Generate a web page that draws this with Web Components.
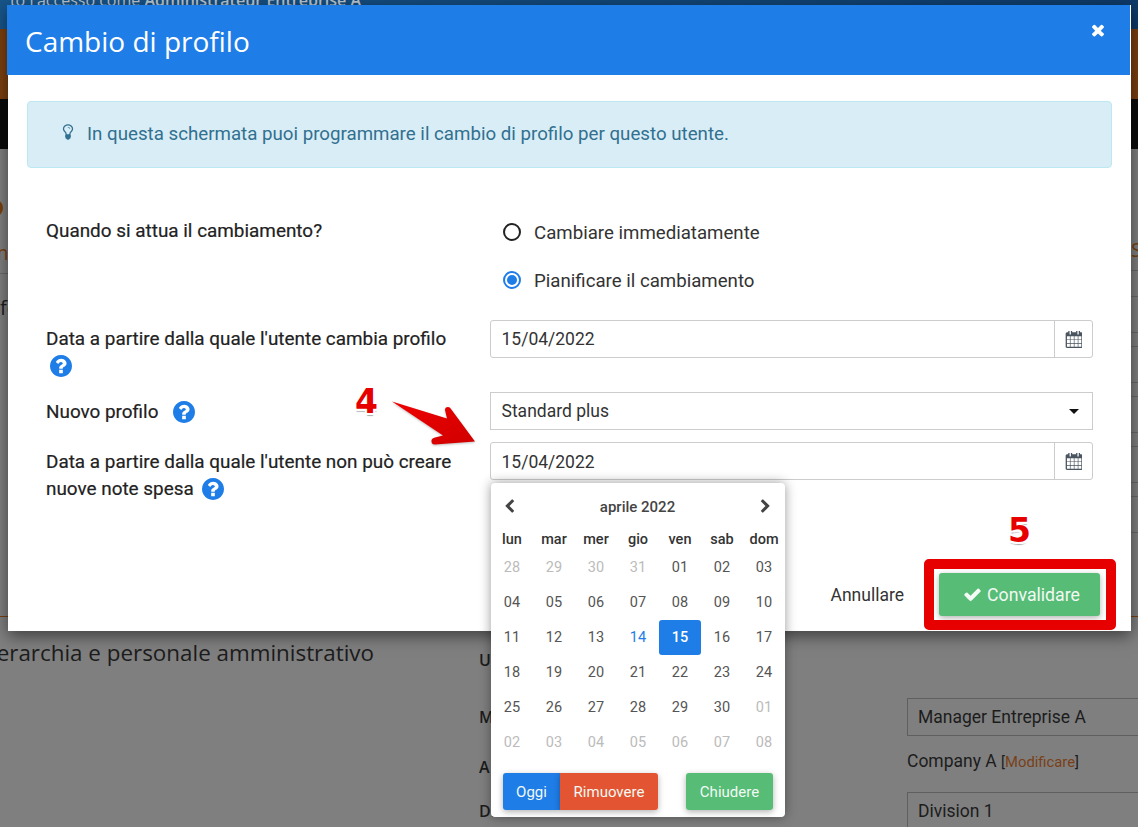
<!DOCTYPE html>
<html lang="it">
<head>
<meta charset="utf-8">
<title>Cambio di profilo</title>
<style>
  html, body { margin: 0; height: 100%; overflow: hidden; background: #7f7f7f; }
  body { font-family: Roboto, "Liberation Sans", sans-serif; }
</style>
</head>
<body>
<x-app>
  <x-backdrop></x-backdrop>

  <x-modal heading="Cambio di profilo">
    <x-alert>In questa schermata puoi programmare il cambio di profilo per questo utente.</x-alert>

    <x-form-row style="margin-top:40px">
      <span slot="label" style="display:block;padding-top:3px">Quando si attua il cambiamento?</span>
      <x-radio>Cambiare immediatamente</x-radio>
      <x-radio checked>Pianificare il cambiamento</x-radio>
    </x-form-row>

    <x-form-row style="margin-top:16px">
      <span slot="label" style="display:block;margin:-1px 0 1px">Data a partire dalla quale l'utente cambia profilo <br><x-help style="margin-left:4px"></x-help></span>
      <x-date-field value="15/04/2022"></x-date-field>
    </x-form-row>

    <x-form-row style="margin-top:12px">
      <span slot="label">Nuovo profilo <x-help style="margin-left:10px"></x-help></span>
      <x-select-field value="Standard plus"></x-select-field>
    </x-form-row>

    <x-form-row style="margin-top:12px">
      <span slot="label">Data a partire dalla quale l'utente non può creare<br>nuove note spesa <x-help style="margin-left:4px"></x-help></span>
      <x-date-field value="15/04/2022" nudge></x-date-field>
    </x-form-row>

    <x-modal-footer slot="footer">
      <span class="cancel">Annullare</span>
      <x-btn color="#56bc76" size="17.7" width="161" height="43" check>Convalidare</x-btn>
    </x-modal-footer>
  </x-modal>

  <x-calendar></x-calendar>
  <x-arrow></x-arrow>
  <x-mark style="left:355px;top:381px">4</x-mark>
  <x-mark style="left:1008px;top:510px">5</x-mark>
  <x-frame></x-frame>
</x-app>

<script>
const ICONS = {
  check: ['0 0 1792 1792', 'M1671 566q0 40-28 68l-724 724-136 136q-28 28-68 28t-68-28l-136-136-362-362q-28-28-28-68t28-68l136-136q28-28 68-28t68 28l294 295 656-657q28-28 68-28t68 28l136 136q28 28 28 68z'],
  times: ['0 0 1792 1792', 'M1490 1322q0 40-28 68l-136 136q-28 28-68 28t-68-28l-294-294-294 294q-28 28-68 28t-68-28l-136-136q-28-28-28-68t28-68l294-294-294-294q-28-28-28-68t28-68l136-136q28-28 68-28t68 28l294 294 294-294q28-28 68-28t68 28l136 136q28 28 28 68t-28 68l-294 294 294 294q28 28 28 68z'],
  help: ['128 128 1536 1536', 'M1024 1376v-192q0-14-9-23t-23-9h-192q-14 0-23 9t-9 23v192q0 14 9 23t23 9h192q14 0 23-9t9-23zm256-672q0-88-55.5-163t-138.5-116-170-41q-243 0-371 213-15 24 8 42l132 100q7 6 19 6 16 0 25-12 53-68 86-92 34-24 86-24 48 0 85.5 26t37.5 59q0 38-20 61t-68 45q-63 28-115.5 86.5t-52.5 125.5v36q0 14 9 23t23 9h192q14 0 23-9t9-23q0-19 21.5-49.5t54.5-49.5q32-18 49-28.5t46-35 44.5-48 28-60.5 12.5-81zm384 192q0 209-103 385.5t-279.5 279.5-385.5 103-385.5-103-279.5-279.5-103-385.5 103-385.5 279.5-279.5 385.5-103 385.5 103 279.5 279.5 103 385.5z'],
  bulb: ['0 0 1792 1792', 'M1120 576q0 13-9.5 22.5t-22.5 9.5-22.5-9.5-9.5-22.5q0-46-54-71t-106-25q-13 0-22.5-9.5t-9.5-22.5 9.5-22.5 22.5-9.5q50 0 99.5 16t87 54 37.5 90zm160 0q0-72-34.5-134t-90-101.5-123-62-136.5-22.5-136.5 22.5-123 62-90 101.5-34.5 134q0 101 68 180 10 11 30.5 33t30.5 33q128 153 141 298h228q13-145 141-298 10-11 30.5-33t30.5-33q68-79 68-180zm128 0q0 155-103 268-45 49-74.5 87t-59.5 95.5-34 107.5q47 28 47 82 0 37-25 64 25 27 25 64 0 52-45 81 13 23 13 47 0 46-31.5 71t-77.5 25q-20 44-60 70t-87 26-87-26-60-70q-46 0-77.5-25t-31.5-71q0-24 13-47-45-29-45-81 0-37 25-64-25-27-25-64 0-54 47-82-4-50-34-107.5t-59.5-95.5-74.5-87q-103-113-103-268 0-99 44.5-184.5t117-142 164-89 186.5-32.5 186.5 32.5 164 89 117 142 44.5 184.5z'],
  left: ['0 0 1792 1792', 'M1427 301l-531 531 531 531q19 19 19 45t-19 45l-166 166q-19 19-45 19t-45-19l-742-742q-19-19-19-45t19-45l742-742q19-19 45-19t45 19l166 166q19 19 19 45t-19 45z'],
  right: ['0 0 1792 1792', 'M1363 877l-742 742q-19 19-45 19t-45-19l-166-166q-19-19-19-45t19-45l531-531-531-531q-19-19-19-45t19-45l166-166q19-19 45-19t45 19l742 742q19 19 19 45t-19 45z'],
  calendar: ['0 128 1664 1664', 'M192 1664h288v-288h-288v288zm352 0h320v-288h-320v288zm-352-352h288v-320h-288v320zm352 0h320v-320h-320v320zm-352-384h288v-288h-288v288zm736 736h320v-288h-320v288zm-384-736h320v-288h-320v288zm768 736h288v-288h-288v288zm-384-352h320v-320h-320v320zm-352-864v-288q0-13-9.5-22.5t-22.5-9.5h-64q-13 0-22.5 9.5t-9.5 22.5v288q0 13 9.5 22.5t22.5 9.5h64q13 0 22.5-9.5t9.5-22.5zm736 864h288v-320h-288v320zm-384-384h320v-288h-320v288zm384 0h288v-288h-288v288zm32-480v-288q0-13-9.5-22.5t-22.5-9.5h-64q-13 0-22.5 9.5t-9.5 22.5v288q0 13 9.5 22.5t22.5 9.5h64q13 0 22.5-9.5t9.5-22.5zm384-64v1280q0 52-38 90t-90 38h-1408q-52 0-90-38t-38-90v-1280q0-52 38-90t90-38h128v-96q0-66 47-113t113-47h64q66 0 113 47t47 113v96h384v-96q0-66 47-113t113-47h64q66 0 113 47t47 113v96h128q52 0 90 38t38 90z']
};

// small helper, every element below is the same boilerplate otherwise
class Base extends HTMLElement {
  constructor() {
    super();
    this.attachShadow({mode: 'open'});
  }
  render(html) {
    this.shadowRoot.innerHTML = html;
  }
}

function icon(name, size, color) {
  const [box, d] = ICONS[name];
  return `<svg xmlns="http://www.w3.org/2000/svg" width="${size}" height="${size}" viewBox="${box}" style="display:block;flex:none"><path fill="${color}" d="${d}"/></svg>`;
}

class App extends Base {
  connectedCallback() {
    this.render(`<style>
      :host { display:block; position:relative; width:1138px; height:827px; overflow:hidden; }
    </style><slot></slot>`);
  }
}

/* everything behind the modal, already dimmed */
class Backdrop extends Base {
  connectedCallback() {
    const gaps = [26, 36, 14, 36, 14, 36, 14, 36, 14, 36];
    const lines = gaps.map(g => `<div class="ln" style="margin-top:${g - 1}px"></div>`).join('');
    this.render(`<style>
      :host { display:block; width:1138px; height:827px; overflow:hidden; background:#7f7f7f; color:#1c1c1c; font-family:"Open Sans",sans-serif; }
      .top { height:29px; background:linear-gradient(to right,#175488,#0e3a68); overflow:hidden; display:flex; justify-content:flex-end; width:361px; padding-right:777px; }
      .top span { margin-top:-13px; color:#b9c4d0; font-size:16px; line-height:26px; white-space:nowrap; }
      .top b { font-weight:600; }
      .orange { height:70px; background:#7a3f10; }
      .black { height:50px; background:#0a0a0a; }
      .mid { height:467px; display:flex; justify-content:space-between; }
      .strip { width:8px; overflow:hidden; position:relative; }
      .dot { width:14px; height:16px; margin:51px 0 0 -11px; border-radius:50%; background:#7a3f10; }
      .m, .s { font-size:20px; line-height:26px; color:#7a3f10; }
      .m { margin:24px 0 0 -10px; }
      .ln { border-top:1px solid #686868; margin-left:-2px; }
      .f { font-size:20px; line-height:26px; margin-top:21px; white-space:nowrap; }
      .s { margin-top:88px; }
      .orange-line { height:1px; background:#7a3f10; }
      .foot { display:grid; grid-template-columns:479px 428px 1fr; }
      .title { width:374px; display:flex; justify-content:flex-end; padding-top:21px; font-size:22.4px; line-height:30px; white-space:nowrap; }
      .keys { font-size:16px; font-weight:600; line-height:22px; overflow:hidden; }
      .keys div { position:relative; }
      .vals { padding-top:81px; font-family:Roboto,sans-serif; font-size:17.5px; }
      .box { height:36px; border:1px solid #5f5f5f; border-right:0; line-height:36px; padding-left:10px; }
      .co { line-height:26px; margin:12px 0 17px; }
      .co small { font-size:14.8px; }
      .co a { color:#7a3f18; }
    </style>
    <div class="top"><span>to l'accesso come <b>Administrateur Entreprise A</b></span></div>
    <div class="orange"></div>
    <div class="black"></div>
    <div class="mid">
      <div class="strip">
        <div class="dot"></div>
        <div class="m">m</div>
        <div class="ln" style="margin-top:7px"></div>
        <div class="f">fo</div>
      </div>
      <div class="strip" style="width:7px">
        <div class="s">S</div>
        <div class="ln" style="margin-top:7px"></div>
        ${lines}
      </div>
    </div>
    <div class="orange-line"></div>
    <div class="foot">
      <div class="title"><span>erarchia e personale amministrativo</span></div>
      <div class="keys">
        <div style="margin-top:32px">Ut</div>
        <div style="margin-top:35px">M</div>
        <div style="margin-top:28px">A</div>
        <div style="margin-top:22px">Di</div>
      </div>
      <div class="vals">
        <div class="box">Manager Entreprise A</div>
        <div class="co">Company A <small>[<a>Modificare</a>]</small></div>
        <div class="box">Division 1</div>
      </div>
    </div>`);
  }
}

class Modal extends Base {
  connectedCallback() {
    this.render(`<style>
      :host { position:absolute; left:8px; top:5px; width:1123px; height:626px; display:flex; flex-direction:column;
              background:#fff; box-shadow:0 5px 15px rgba(0,0,0,.5); color:#222; font-family:Roboto,sans-serif; }
      header { height:70px; margin:0 1px 1px -1px; flex:none; background:#1e7de6; color:#fff; display:flex; align-items:center;
               justify-content:space-between; box-sizing:border-box; padding:0 23px 0 18px; position:relative; }
      h1 { margin:0 0 -1px; font:400 28px/36px "Open Sans",sans-serif; }
      .close { margin-top:-20px; }
      main { flex:1; padding:25px 19px 0; display:block; }
    </style>
    <header><h1>${this.getAttribute('heading')}</h1><div class="close">${icon('times', 18, '#fff')}</div></header>
    <main><slot></slot></main>
    <slot name="footer"></slot>`);
  }
}

class Alert extends Base {
  connectedCallback() {
    this.render(`<style>
      :host { display:flex; align-items:center; height:67px; box-sizing:border-box; padding:0 0 2px 34px; background:#d9edf7;
              border:1px solid #bce8f1; border-radius:4px; color:#31708f; font-size:18.72px; }
      .i { margin:-4px 0 0 -3px; width:28px; }
    </style><div class="i">${icon('bulb', 18, '#31708f')}</div><span><slot></slot></span>`);
  }
}

class FormRow extends Base {
  connectedCallback() {
    this.render(`<style>
      :host { display:grid; grid-template-columns:444px 603px; margin-left:19px; }
      .l { font-size:18.9px; line-height:27px; padding:6px 0 0; font-weight:400; color:#222; -webkit-text-stroke:.2px #222; white-space:nowrap; }
    </style><div class="l"><slot name="label"></slot></div><div><slot></slot></div>`);
  }
}

class Radio extends Base {
  connectedCallback() {
    const on = this.hasAttribute('checked');
    this.render(`<style>
      :host { display:flex; align-items:center; height:48px; margin-left:13px; font-size:18.66px; color:#333; }
      .r { width:18px; height:18px; box-sizing:border-box; border-radius:50%; border:2px solid ${on ? '#1e7de6' : '#222'}; margin-right:13px;
           display:flex; align-items:center; justify-content:center; }
      .r i { width:10px; height:10px; border-radius:50%; background:#1e7de6; display:${on ? 'block' : 'none'}; }
      span { padding-top:2px; }
    </style><div class="r"><i></i></div><span><slot></slot></span>`);
  }
}

class Help extends Base {
  connectedCallback() {
    this.render(`<style>
      :host { display:inline-block; vertical-align:-5px; width:22px; height:22px; }
    </style>${icon('help', 22, '#1e7de6')}`);
  }
}

class DateField extends Base {
  connectedCallback() {
    const lh = this.hasAttribute('nudge') ? 38 : 36;
    this.render(`<style>
      :host { display:flex; height:38px; box-sizing:border-box; border:1px solid #ccc; border-radius:3px; font-size:17.5px; color:#333; }
      .v { flex:1; padding-left:10.5px; line-height:${lh}px; height:36px; }
      .a { width:37px; border-left:1px solid #ccc; display:flex; align-items:center; justify-content:center; }
    </style><div class="v">${this.getAttribute('value')}</div><div class="a">${icon('calendar', 17, '#4a5560')}</div>`);
  }
}

class SelectField extends Base {
  connectedCallback() {
    this.render(`<style>
      :host { display:flex; height:38px; box-sizing:border-box; border:1px solid #ccc; font-size:17.5px; color:#333; align-items:center; justify-content:space-between; padding:0 13px 0 10.5px; }
      i { width:0; height:0; border:5px solid transparent; border-top-color:#111; border-bottom:0; }
    </style><span>${this.getAttribute('value')}</span><i></i>`);
  }
}

class ModalFooter extends Base {
  connectedCallback() {
    this.render(`<style>
      :host { display:flex; justify-content:flex-end; align-items:center; gap:35px; padding:0 31px 15px 0; font-size:17.5px; color:#333; }
    </style><slot></slot>`);
  }
}

class Btn extends Base {
  connectedCallback() {
    const size = this.getAttribute('size') || 15;
    const hasCheck = this.hasAttribute('check');
    const check = hasCheck ? icon('check', 19, '#f4fbf6') : '';
    this.render(`<style>
      :host { display:flex; align-items:center; justify-content:center; gap:5px; box-sizing:border-box; padding-left:${hasCheck ? 4 : 0}px;
              width:${this.getAttribute('width')}px; height:${this.getAttribute('height')}px;
              background:${this.getAttribute('color')}; color:#f2f9f4; font-size:${size}px; border-radius:${this.getAttribute('radius') || '3px'};
              box-shadow:0 2px 6px rgba(0,0,0,.3); }
    </style>${check}<span><slot></slot></span>`);
  }
}

class Calendar extends Base {
  connectedCallback() {
    const days = ['lun','mar','mer','gio','ven','sab','dom'];
    const cells = [];
    const push = (n, cls) => cells.push(`<div class="c ${cls}"><span>${String(n).padStart(2,'0')}</span></div>`);
    [28,29,30,31].forEach(n => push(n, 'off'));
    for (let n = 1; n <= 30; n++) push(n, n === 14 ? 'today' : n === 15 ? 'sel' : '');
    [1,2,3,4,5,6,7,8].forEach(n => push(n, 'off'));
    this.render(`<style>
      :host { position:absolute; left:491px; top:483px; width:294px; height:334px; box-sizing:border-box; background:#fff; border-radius:4px;
              box-shadow:0 0 12px rgba(0,0,0,.4); color:#555; font-size:14.5px; display:flex; flex-direction:column; font-family:Roboto,sans-serif; }
      .head { height:47px; display:flex; align-items:center; justify-content:space-between; padding:0 12px 0 11px; font-weight:500; font-size:15px; color:#444; }
      .dow, .grid { display:grid; grid-template-columns:repeat(7,42px); }
      .dow { height:18px; padding-bottom:2px; align-items:center; text-align:center; font-weight:500; font-size:14.5px; color:#333; }
      .grid { grid-auto-rows:35px; }
      .c { display:flex; align-items:center; justify-content:center; }
      .c span { margin-top:-1px; }
      .off { color:#bbb; }
      .today { color:#1e7de6; }
      .sel { background:#1e7de6; color:#fff; font-weight:500; border-radius:3px; }
      .foot { display:flex; justify-content:space-between; padding:13px 12px 0; }
      .grp { display:flex; }
    </style>
    <div class="head">${icon('left', 15, '#444')}<span>aprile 2022</span>${icon('right', 15, '#444')}</div>
    <div class="dow">${days.map(d => `<span>${d}</span>`).join('')}</div>
    <div class="grid">${cells.join('')}</div>
    <div class="foot">
      <div class="grp">
        <x-btn color="#1e7de6" width="57" height="37" radius="3px 0 0 3px">Oggi</x-btn>
        <x-btn color="#e35532" width="98" height="37" radius="0 3px 3px 0">Rimuovere</x-btn>
      </div>
      <x-btn color="#56bc76" width="87" height="37">Chiudere</x-btn>
    </div>`);
  }
}

/* annotations painted on the screenshot */
class Arrow extends Base {
  connectedCallback() {
    this.render(`<style>
      :host { position:absolute; left:388px; top:398px; width:92px; height:50px; }
      svg { display:block; overflow:visible; filter:drop-shadow(0 1px 1px rgba(0,0,0,.25)); }
    </style>
    <svg width="92" height="50" viewBox="388 398 92 50">
      <defs><linearGradient id="g" x1="0" y1="0" x2="1" y2="1"><stop offset="0" stop-color="#f00000"/><stop offset="1" stop-color="#d00000"/></linearGradient></defs>
      <path fill="url(#g)" d="M392 401.500L447 418.500L445 410Q445 407 448 407Q450 407 451 409L475 441.500L435 444.500Q431 444.500 431.500 440Q432 438 435 437.500L443 435.500Z"/>
    </svg>`);
  }
}

class Mark extends Base {
  connectedCallback() {
    this.render(`<style>
      :host { position:absolute; font:700 33px/42px "DejaVu Sans",sans-serif; color:#e60000; letter-spacing:0;
              text-shadow:-2px 0 0 #fff, 2px 0 0 #fff, 0 -1px 0 #fff, 0 2px 0 #fff, -2px 2px 0 #fff, 2px 2px 0 #fff, 0 3px 1px #aaa; }
    </style><slot></slot>`);
  }
}

class Frame extends Base {
  connectedCallback() {
    this.render(`<style>
      :host { position:absolute; left:924px; top:559px; width:192px; height:71px; box-sizing:border-box; border:10px solid #e60000; border-radius:5px; }
    </style>`);
  }
}

customElements.define('x-app', App);
customElements.define('x-backdrop', Backdrop);
customElements.define('x-modal', Modal);
customElements.define('x-alert', Alert);
customElements.define('x-form-row', FormRow);
customElements.define('x-radio', Radio);
customElements.define('x-help', Help);
customElements.define('x-date-field', DateField);
customElements.define('x-select-field', SelectField);
customElements.define('x-modal-footer', ModalFooter);
customElements.define('x-btn', Btn);
customElements.define('x-calendar', Calendar);
customElements.define('x-arrow', Arrow);
customElements.define('x-mark', Mark);
customElements.define('x-frame', Frame);
</script>
</body>
</html>
